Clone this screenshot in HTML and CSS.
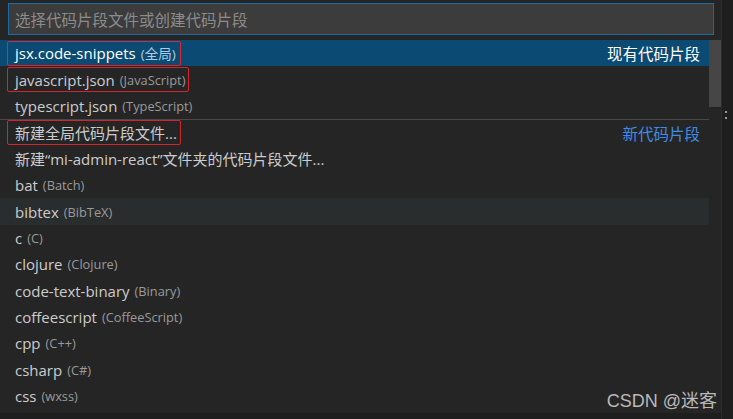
FILE: index.html
```html
<!DOCTYPE html>
<html lang="zh-CN">
<head>
<meta charset="utf-8">
<title>Snippets</title>
<link rel="stylesheet" href="styles.css">
</head>
<body>
<div class="screen">
  <div class="widget">
    <div class="header">
      <div class="input"><span class="placeholder">选择代码片段文件或创建代码片段</span></div>
    </div>
    <div class="list">
      <div class="row selected">
        <span class="mark m1"><span class="label">jsx.code-snippets</span><span class="desc">(全局)</span></span>
        <span class="group">现有代码片段</span>
      </div>
      <div class="row">
        <span class="mark m2"><span class="label">javascript.json</span><span class="desc">(JavaScript)</span></span>
      </div>
      <div class="row">
        <span class="label">typescript.json</span><span class="desc">(TypeScript)</span>
      </div>
      <div class="row sep">
        <span class="mark m3"><span class="label">新建全局代码片段文件...</span></span>
        <span class="group blue">新代码片段</span>
      </div>
      <div class="row">
        <span class="label">新建“mi-admin-react”文件夹的代码片段文件...</span>
      </div>
      <div class="row"><span class="label">bat</span><span class="desc">(Batch)</span></div>
      <div class="row hover"><span class="label">bibtex</span><span class="desc">(BibTeX)</span></div>
      <div class="row"><span class="label">c</span><span class="desc">(C)</span></div>
      <div class="row"><span class="label">clojure</span><span class="desc">(Clojure)</span></div>
      <div class="row"><span class="label">code-text-binary</span><span class="desc">(Binary)</span></div>
      <div class="row"><span class="label">coffeescript</span><span class="desc">(CoffeeScript)</span></div>
      <div class="row"><span class="label">cpp</span><span class="desc">(C++)</span></div>
      <div class="row"><span class="label">csharp</span><span class="desc">(C#)</span></div>
      <div class="row"><span class="label">css</span><span class="desc">(wxss)</span></div>
      <div class="scrollbar"></div>
    </div>
    <div class="watermark">CSDN @迷客</div>
  </div>
  <div class="side"><span class="dot"></span><span class="dot"></span></div>
</div>
</body>
</html>
```

FILE: styles.css
```css
html, body {
  margin: 0;
  padding: 0;
  background: #1e1e1e;
}
body {
  font-family: "Open Sans", "Noto Sans CJK SC", sans-serif;
  width: 733px;
  height: 419px;
  overflow: hidden;
}
.screen {
  display: flex;
  width: 733px;
  height: 419px;
}
.widget {
  position: relative;
  width: 721px;
  height: 413px;
  background: #252526;
  box-sizing: border-box;
}
.header {
  padding: 3px 7px 0 8px;
}
.input {
  height: 32px;
  box-sizing: border-box;
  border: 1px solid #1c6aa3;
  background: #3c3c3c;
  display: flex;
  align-items: center;
  padding-left: 6px;
}
.placeholder {
  color: #8c8c8c;
  font-size: 15.5px;
  font-family: "Noto Sans CJK SC", sans-serif;
}
.list {
  position: relative;
  margin-top: 5px;
  width: 709px;
}
.row {
  height: 26.4px;
  display: flex;
  align-items: center;
  padding-left: 15px;
  box-sizing: border-box;
  white-space: nowrap;
  position: relative;
}
.label {
  color: #cccccc;
  font-size: 15px;
}
.desc {
  color: #9a9a9a;
  font-size: 12.8px;
  margin-left: 5px;
}
.selected {
  background: #0b4a72;
}
.selected .label {
  color: #ffffff;
}
.selected .desc {
  color: #b3cbe0;
  font-size: 13.5px;
}
.hover {
  background: #2a2d2e;
}
.sep {
  border-top: 1px solid #474747;
}
.group {
  margin-left: auto;
  padding-right: 9px;
  font-size: 15.5px;
  color: #ffffff;
  font-family: "Noto Sans CJK SC", sans-serif;
}
.group.blue {
  color: #3f8ce6;
}
.mark {
  display: inline-flex;
  align-items: center;
  border: 1px solid #d0262c;
  border-radius: 2px;
  margin-left: -8px;
  padding: 0 3px 0 7px;
  height: 25px;
  box-sizing: border-box;
}
.mark.m1 {
  border-color: #d42a30;
  padding-right: 4px;
}
.scrollbar {
  position: absolute;
  top: 0;
  left: 709px;
  width: 12px;
  height: 67px;
  background: rgba(121, 121, 121, 0.4);
}
.watermark {
  position: absolute;
  right: 4px;
  bottom: 1px;
  font-family: "Liberation Sans", "Noto Sans CJK SC", sans-serif;
  font-size: 18px;
  color: #b9b9b9;
}
.side {
  flex: 1;
  display: flex;
  flex-direction: column;
  align-items: flex-start;
  padding: 111px 0 0 3px;
  gap: 4px;
  border-left: 1px solid #2b2b2b;
}
.dot {
  width: 2px;
  height: 2px;
  background: #9a9a9a;
}
```
